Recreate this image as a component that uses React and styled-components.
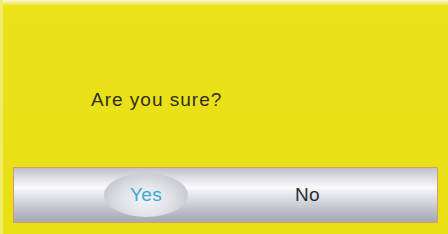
import styled, { createGlobalStyle } from "styled-components";

const Global = createGlobalStyle`
  html, body { margin: 0; padding: 0; }
  body { width: 448px; height: 234px; overflow: hidden; }
`;

const Screen = styled.div`
  width: 448px;
  height: 234px;
  box-sizing: border-box;
  background: linear-gradient(to bottom, #fbf6d8 0px, #ece21a 6px, #e8df14 100%);
  border-left: 3px solid #f1eb6a;
  display: flex;
  flex-direction: column;
  font-family: "Liberation Sans", Arial, sans-serif;
`;

const Message = styled.div`
  flex: 1;
  display: flex;
  align-items: center;
  padding: 33px 0 0 88px;
  font-size: 19px;
  color: #2e2e22;
  letter-spacing: 1px;
`;

const Bar = styled.div`
  margin: 0 10px 11px 10px;
  height: 56px;
  box-sizing: border-box;
  border: 1px solid #d99a70;
  background: linear-gradient(
    to bottom,
    #bfc1ca 0%,
    #dedfe5 18%,
    #fafafc 36%,
    #dcdee3 56%,
    #b6b9c3 84%,
    #a6aab4 100%
  );
  display: grid;
  grid-template-columns: 1fr 1fr;
  align-items: center;
`;

const Choice = styled.div`
  margin-left: ${(p) => p.$offset}px;
  width: 84px;
  height: 44px;
  border-radius: 50%;
  display: flex;
  align-items: center;
  justify-content: center;
  font-size: 19px;
  letter-spacing: 0.3px;
  color: ${(p) => (p.$active ? "#38a9d2" : "#2c2c30")};
  background: ${(p) =>
    p.$active
      ? "radial-gradient(ellipse at 50% 60%, #f4f5f8 0%, #e2e4e9 40%, #c6c9d0 75%, rgba(190,193,201,0) 100%)"
      : "transparent"};
`;

export default function App() {
  return (
    <>
      <Global />
      <Screen>
        <Message>Are you sure?</Message>
        <Bar>
          <Choice $active $offset={90}>Yes</Choice>
          <Choice $offset={40}>No</Choice>
        </Bar>
      </Screen>
    </>
  );
}
